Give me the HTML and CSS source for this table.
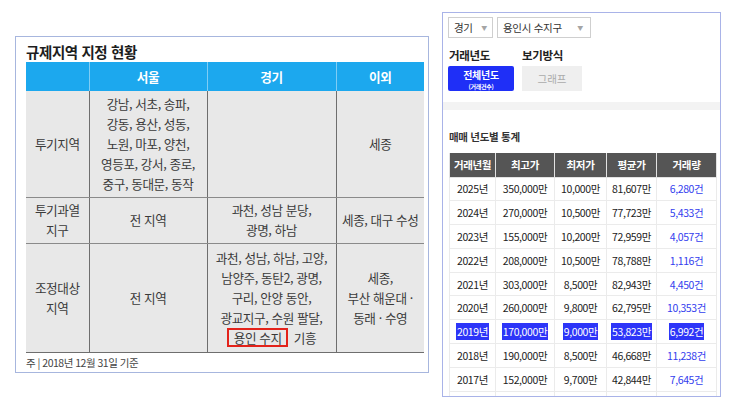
FILE: index.html
```html
<!DOCTYPE html>
<html lang="ko">
<head>
<meta charset="utf-8">
<link rel="stylesheet" href="styles.css">
</head>
<body>
<div class="page">
  <section class="left">
    <h1 class="title">규제지역 지정 현황</h1>
    <table class="reg">
      <colgroup>
        <col class="c1"><col class="c2"><col class="c3"><col class="c4">
      </colgroup>
      <thead>
        <tr><th></th><th>서울</th><th>경기</th><th>이외</th></tr>
      </thead>
      <tbody>
        <tr class="r1">
          <td>투기지역</td>
          <td>강남, 서초, 송파,<br>강동, 용산, 성동,<br>노원, 마포, 양천,<br>영등포, 강서, 종로,<br>중구, 동대문, 동작</td>
          <td></td>
          <td>세종</td>
        </tr>
        <tr class="r2">
          <td>투기과열<br>지구</td>
          <td>전 지역</td>
          <td>과천, 성남 분당,<br>광명, 하남</td>
          <td>세종, 대구 수성</td>
        </tr>
        <tr class="r3">
          <td>조정대상<br>지역</td>
          <td>전 지역</td>
          <td>과천, 성남, 하남, 고양,<br>남양주, 동탄2, 광명,<br>구리, 안양 동안,<br>광교지구, 수원 팔달,<br><span class="boxed">용인 수지</span> 기흥</td>
          <td>세종,<br>부산 해운대 ·<br>동래 · 수영</td>
        </tr>
      </tbody>
    </table>
    <p class="note">주 | 2018년 12월 31일 기준</p>
  </section>

  <section class="right">
    <div class="selects">
      <div class="sel-box s1"><span>경기</span><span class="arr">▼</span></div>
      <div class="sel-box s2"><span>용인시 수지구</span><span class="arr">▼</span></div>
    </div>
    <div class="labels">
      <span class="lab l1">거래년도</span>
      <span class="lab">보기방식</span>
    </div>
    <div class="buttons">
      <div class="btn on"><span class="b-main">전체년도</span><span class="b-sub">(거래건수)</span></div>
      <div class="btn off">그래프</div>
    </div>
    <div class="band"></div>
    <h2 class="stat-title">매매 년도별 통계</h2>
    <table class="stat">
      <colgroup>
        <col class="k1"><col class="k2"><col class="k3"><col class="k4"><col class="k5">
      </colgroup>
      <thead>
        <tr><th>거래년월</th><th>최고가</th><th>최저가</th><th>평균가</th><th>거래량</th></tr>
      </thead>
      <tbody>
        <tr><td>2025년</td><td>350,000만</td><td>10,000만</td><td>81,607만</td><td class="cnt">6,280건</td></tr>
        <tr><td>2024년</td><td>270,000만</td><td>10,500만</td><td>77,723만</td><td class="cnt">5,433건</td></tr>
        <tr><td>2023년</td><td>155,000만</td><td>10,200만</td><td>72,959만</td><td class="cnt">4,057건</td></tr>
        <tr><td>2022년</td><td>208,000만</td><td>10,500만</td><td>78,788만</td><td class="cnt">1,116건</td></tr>
        <tr><td>2021년</td><td>303,000만</td><td>8,500만</td><td>82,943만</td><td class="cnt">4,450건</td></tr>
        <tr><td>2020년</td><td>260,000만</td><td>9,800만</td><td>62,795만</td><td class="cnt">10,353건</td></tr>
        <tr class="hl"><td><span class="mark">2019년</span></td><td><span class="mark">170,000만</span></td><td><span class="mark">9,000만</span></td><td><span class="mark">53,823만</span></td><td><span class="mark">6,992건</span></td></tr>
        <tr><td>2018년</td><td>190,000만</td><td>8,500만</td><td>46,668만</td><td class="cnt">11,238건</td></tr>
        <tr><td>2017년</td><td>152,000만</td><td>9,700만</td><td>42,844만</td><td class="cnt">7,645건</td></tr>
        <tr class="empty"><td></td><td></td><td></td><td></td><td></td></tr>
      </tbody>
    </table>
  </section>
</div>
</body>
</html>
```

FILE: styles.css
```css
* { box-sizing: border-box; }
html, body { margin: 0; padding: 0; background: #fff; }
body {
  font-family: "Noto Sans CJK KR", "Noto Sans", sans-serif;
  color: #222;
}
.page {
  display: flex;
  align-items: flex-start;
  padding: 12px 0 0 15px;
  gap: 13px;
  width: 733px;
  height: 406px;
  overflow: hidden;
}

/* ---------- left panel ---------- */
.left {
  width: 414px;
  height: 337px;
  margin-top: 24px;
  border: 1px solid #a7b6de;
  padding: 5px 4px 0 10px;
}
.title {
  margin: 0;
  font-size: 14.5px;
  line-height: 20px;
  font-weight: 700;
  color: #1d1d1d;
  letter-spacing: -0.4px;
}
.reg {
  border-collapse: collapse;
  width: 398px;
  table-layout: fixed;
  font-size: 12.6px;
  letter-spacing: -0.4px;
  color: #3a3a3a;
}
.reg .c1 { width: 63px; }
.reg .c2 { width: 118px; }
.reg .c3 { width: 129px; }
.reg .c4 { width: 88px; }
.reg th {
  background: #1ca8ee;
  color: #fff;
  font-weight: 700;
  height: 29px;
  padding: 0;
  font-size: 12.6px;
  border-left: 1px solid #7fcdf5;
}
.reg th:first-child { border-left: none; }
.reg td {
  background: #e8e8e8;
  text-align: center;
  vertical-align: middle;
  padding: 0 2px;
  line-height: 20px;
  border-left: 1px solid #6e6e6e;
  border-bottom: 1px solid #8a8a8a;
}
.reg td:first-child { border-left: none; }
.reg .r1 td { height: 106px; }
.reg .r2 td { height: 46px; }
.reg .r3 td { height: 109px; border-bottom: 1px solid #6e6e6e; }
.boxed {
  display: inline-block;
  border: 2px solid #e3231b;
  line-height: 15px;
  padding: 0 4px 0 5px;
  margin-right: 3px;
}
.note {
  margin: 2px 0 0 0;
  font-size: 10.5px;
  line-height: 15px;
  color: #444;
  letter-spacing: -0.5px;
}

/* ---------- right panel ---------- */
.right {
  width: 279px;
  height: 385px;
  border: 1px solid #a9b3e8;
  padding: 4px 4px 0 5px;
  overflow: hidden;
  background: #fff;
}
.selects { display: flex; gap: 4px; }
.sel-box {
  height: 21px;
  border: 1px solid #cfcfcf;
  display: flex;
  align-items: center;
  justify-content: space-between;
  padding: 0 5px 0 5px;
  font-size: 10.5px;
  color: #333;
  letter-spacing: -0.3px;
}
.s1 { width: 45px; }
.s2 { width: 94px; padding-right: 7px; }
.arr { font-size: 6px; color: #a5a5a5; }
.labels {
  margin-top: 9px;
  display: flex;
  font-size: 11.5px;
  font-weight: 700;
  line-height: 16px;
  color: #222;
  letter-spacing: -0.3px;
}
.l1 { width: 74px; padding-left: 1px; }
.buttons { display: flex; gap: 8px; margin-top: 3px; }
.btn {
  height: 25px;
  display: flex;
  flex-direction: column;
  align-items: center;
  justify-content: center;
}
.btn.on {
  width: 66px;
  background: #1f2ff7;
  color: #fff;
  border-radius: 2px;
}
.b-main { font-size: 10px; font-weight: 700; line-height: 15px; height: 15px; letter-spacing: -0.3px; }
.b-sub { font-size: 6px; font-weight: 700; line-height: 9px; height: 9px; letter-spacing: -0.3px; }
.btn.off {
  width: 60px;
  background: #efefef;
  color: #ababab;
  font-size: 10.5px;
}
.band {
  margin: 11px -4px 0 -5px;
  height: 8px;
  background: #f3f3f3;
}
.stat-title {
  margin: 19px 0 0 1px;
  font-size: 10.5px;
  line-height: 16px;
  font-weight: 700;
  color: #333;
  letter-spacing: -0.3px;
}
.stat {
  margin: 8px 0 0 1px;
  border-collapse: collapse;
  table-layout: fixed;
  width: 267px;
  font-size: 10.5px;
  letter-spacing: -0.4px;
}
.stat .k1 { width: 46px; }
.stat .k2 { width: 59px; }
.stat .k3 { width: 52px; }
.stat .k4 { width: 50px; }
.stat .k5 { width: 60px; }
.stat th {
  background: #555;
  color: #fff;
  font-weight: 700;
  height: 24px;
  padding: 0;
  border: 1px solid #e2e2e2;
  border-top: none;
}
.stat td {
  height: 23.8px;
  padding: 0;
  text-align: center;
  border: 1px solid #ebebeb;
  color: #222;
}
.stat td.cnt { color: #3340ee; }
.mark {
  background: #2d35f8;
  color: #fff;
  padding: 1px 1px;
}
```
